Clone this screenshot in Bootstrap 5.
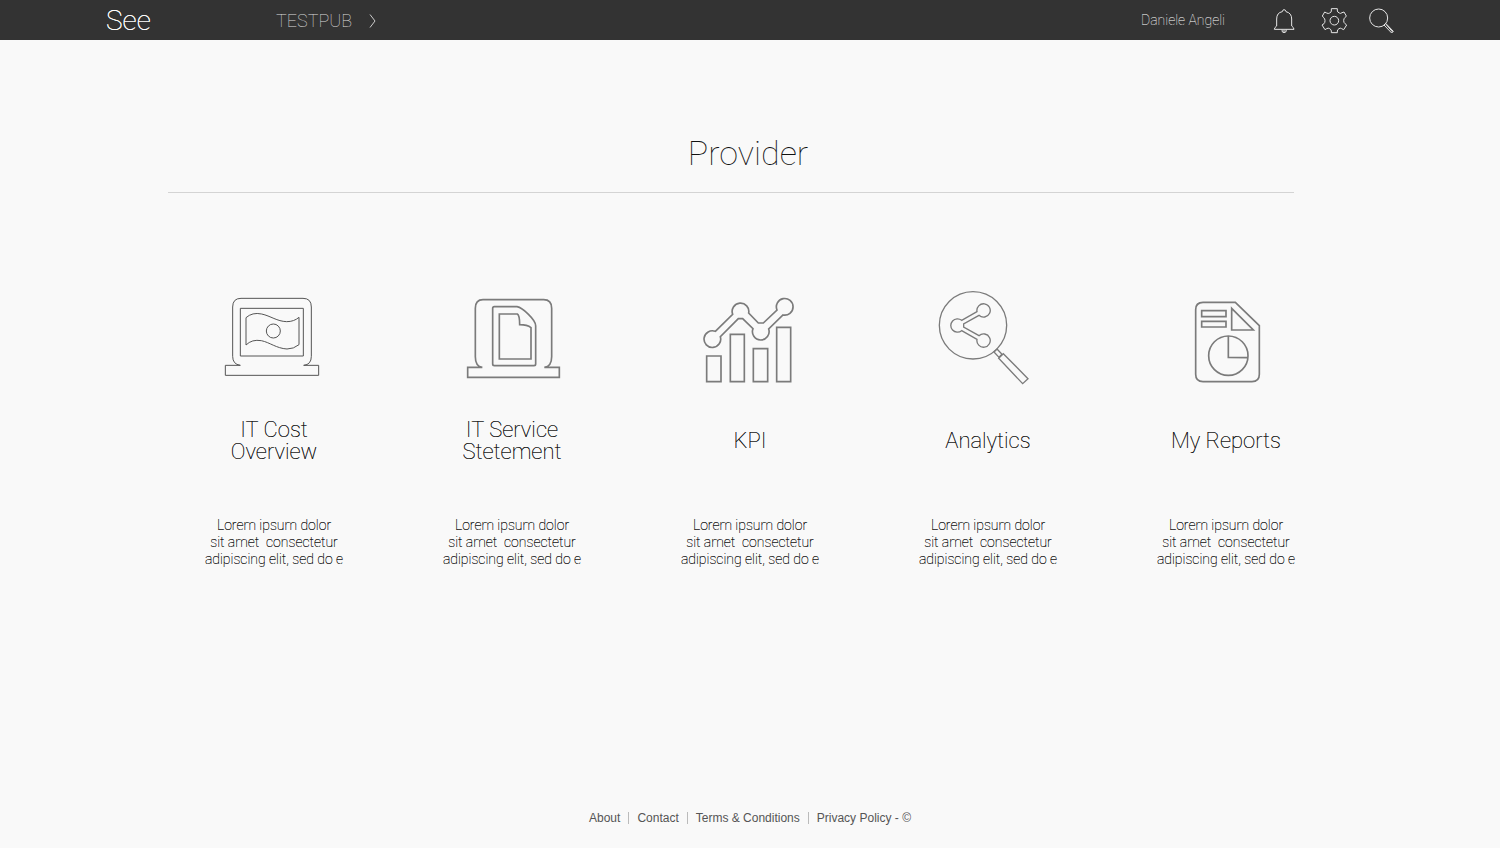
<!DOCTYPE html>
<html lang="en">
<head>
<meta charset="utf-8">
<meta name="viewport" content="width=device-width, initial-scale=1">
<title>See - Provider</title>
<link href="https://cdn.jsdelivr.net/npm/bootstrap@5.3.0/dist/css/bootstrap.min.css" rel="stylesheet">
<style>
  body { background: #f9f9f9; color: #111; font-family: Roboto, sans-serif; font-weight: 100; }
  a { color: inherit; text-decoration: none; }
  svg { display: block; fill: none; }
  .topbar { background: #333; height: 40px; padding: 1px 106px 0; }
  .brand { color: #fff; font-size: 28px; line-height: 39px; width: 170px; text-shadow: 0 0 0 #fff; }
  .space-link { color: #ddd; font-size: 18px; line-height: 39px; gap: 17px; }
  .user-link { color: #fff; font-size: 14px; line-height: 39px; margin-right: 48px; }
  .tools { gap: 22px; }
  .tools button { background: none; border: 0; padding: 0; }
  .tools svg { stroke: #e6e6e6; }
  .board { max-width: 1190px; }
  .page-title { font-size: 34px; line-height: 42px; font-weight: 100; margin: 92px 4px 18px 0; }
  .rule { margin: 0 51px 92px 13px; border-top: 1px solid #d4d4d4; opacity: 1; }
  .tile-icon { width: 116px; height: 105px; stroke: #7b7b7b; stroke-width: 5; }
  .tile-icon.medium { stroke-width: 4; }
  .tile-icon.fine { stroke: #555; stroke-width: 3; }
  .tile-name { font-size: 22px; line-height: 22px; height: 44px; margin: 29px 0 54px; font-weight: 100; text-shadow: 0 0 0 #333; }
  .tile-text { font-size: 14px; line-height: 17px; margin: 0; white-space: pre-line; text-shadow: 0 0 0 #111; }
  .foot { font-family: "Liberation Sans", sans-serif; font-weight: 400; font-size: 12px; line-height: 12px; color: #555; padding-bottom: 24px; }
  .foot a { padding: 0 8px; }
  .foot a + a { border-left: 1px solid #bbb; }
</style>
</head>
<body class="d-flex flex-column min-vh-100">
<header class="topbar d-flex align-items-center">
  <a class="brand" href="#">See</a>
  <a class="space-link d-flex align-items-center" href="#">TESTPUB
    <svg width="8" height="16" viewBox="0 0 8 16" stroke="#ccc"><path d="M1 1.500L6 8L1 14.500"/></svg>
  </a>
  <a class="user-link ms-auto" href="#">Daniele Angeli</a>
  <div class="tools d-flex align-items-center">
    <button type="button" aria-label="Notifications">
      <svg width="26" height="28" viewBox="430 19 78 84" stroke-width="3"><path d="M434 86Q434 81 441 76V55Q441 36 458 33Q459 27 463 27Q468 27 469 33Q486 37 486 55V76Q493 81 493 86ZM457 87Q456 96 463 96Q471 96 470 87M460 91H467"/></svg>
    </button>
    <button type="button" aria-label="Settings">
      <svg width="26" height="28" viewBox="574 20 78 84" stroke-width="3"><circle cx="614" cy="61" r="13"/><path d="M605 25H623V32Q624 36 629 38Q633 41 637 37L643 35L650 47L646 52Q642 54 642 61Q642 67 646 70L651 74L642 88L636 85Q632 82 628 85Q623 88 623 92V97H605V92Q605 88 600 85Q596 82 591 85L586 88L577 74L583 70Q586 67 586 61Q586 55 582 52L578 47L585 35L591 38Q596 41 600 38Q605 36 605 32Z"/></svg>
    </button>
    <button type="button" aria-label="Search">
      <svg width="25" height="28" viewBox="718 20 75 84" stroke-width="3"><circle cx="747" cy="53" r="27"/><path d="M763 74L768 69L791 93L786 98ZM769 72L789 95"/></svg>
    </button>
  </div>
</header>

<main class="board container-fluid px-0 flex-grow-1">
  <h1 class="page-title text-center">Provider</h1>
  <hr class="rule">
  <div class="row row-cols-5 g-0 text-center">
    <div class="col">
      <a class="d-block" href="#">
        <svg class="tile-icon fine mx-auto" viewBox="3 0 348 315"><path d="M31 241H76Q53 238 53 214V66Q53 40 78 40H264Q289 40 289 66V214Q289 239 266 241H311V271H31ZM76 70H265V213H76ZM93 98Q112 81 140 87C167 93 186 109 215 110Q237 110 252 97V179Q236 192 216 192C184 190 164 172 139 167Q111 162 93 180Z"/><circle cx="175" cy="138" r="21"/></svg>
        <h2 class="tile-name d-flex align-items-center justify-content-center">IT Cost<br>Overview</h2>
      </a>
      <p class="tile-text">Lorem ipsum dolor
        sit amet&nbsp; consectetur
        adipiscing elit, sed do e</p>
    </div>
    <div class="col">
      <a class="d-block" href="#">
        <svg class="tile-icon mx-auto" viewBox="-3 0 348 315"><path d="M38 247H82Q61 244 61 215V70Q61 44 84 44H266Q290 44 290 70V215Q290 244 268 247H313V277H38ZM118 65H186C203 68 242 104 242 122V237Q242 242 237 242H118Q113 242 113 237V70Q113 65 118 65ZM133 87H187Q194 91 194 119Q217 119 228 128V222H133Z"/></svg>
        <h2 class="tile-name d-flex align-items-center justify-content-center">IT Service<br>Stetement</h2>
      </a>
      <p class="tile-text">Lorem ipsum dolor
        sit amet&nbsp; consectetur
        adipiscing elit, sed do e</p>
    </div>
    <div class="col">
      <a class="d-block" href="#">
        <svg class="tile-icon mx-auto" viewBox="-9 0 348 315"><path d="M35 213H78V290H35ZM106 148H148V290H106ZM175 191H218V290H175ZM245 127H287V290H245ZM61 139L113 88A25 25 0 1 1 161 84L190 114H205L246 75A25 25 0 1 1 264 90L221 132A25 25 0 1 1 174 131L143 101H130L76 155A25 25 0 1 1 61 139Z"/></svg>
        <h2 class="tile-name d-flex align-items-center justify-content-center">KPI</h2>
      </a>
      <p class="tile-text">Lorem ipsum dolor
        sit amet&nbsp; consectetur
        adipiscing elit, sed do e</p>
    </div>
    <div class="col">
      <a class="d-block" href="#">
        <svg class="tile-icon medium mx-auto" viewBox="0 0 348 315"><circle cx="129" cy="121" r="101"/><path d="M95 106L141 80A20 20 0 1 1 147 91L101 117V126L147 152A20 20 0 1 1 141 163L95 137A20 20 0 1 1 95 106ZM192 201L201 192L216 208L207 217ZM206 220L220 206L294 281L278 296Z"/></svg>
        <h2 class="tile-name d-flex align-items-center justify-content-center">Analytics</h2>
      </a>
      <p class="tile-text">Lorem ipsum dolor
        sit amet&nbsp; consectetur
        adipiscing elit, sed do e</p>
    </div>
    <div class="col">
      <a class="d-block" href="#">
        <svg class="tile-icon mx-auto" viewBox="-36 -15 348 315"><path d="M69 37H166L238 107V253Q238 275 216 275H69Q47 275 47 253V59Q47 37 69 37ZM65 62H138V80H65ZM65 94H138V111H65ZM155 55L220 120H155ZM145 138V202L203 203"/><circle cx="145" cy="197" r="59"/></svg>
        <h2 class="tile-name d-flex align-items-center justify-content-center">My Reports</h2>
      </a>
      <p class="tile-text">Lorem ipsum dolor
        sit amet&nbsp; consectetur
        adipiscing elit, sed do e</p>
    </div>
  </div>
</main>

<footer class="foot d-flex justify-content-center">
  <a href="#">About</a><a href="#">Contact</a><a href="#">Terms &amp; Conditions</a><a href="#">Privacy Policy - ©</a>
</footer>
<script src="https://cdn.jsdelivr.net/npm/bootstrap@5.3.0/dist/js/bootstrap.bundle.min.js"></script>
</body>
</html>
